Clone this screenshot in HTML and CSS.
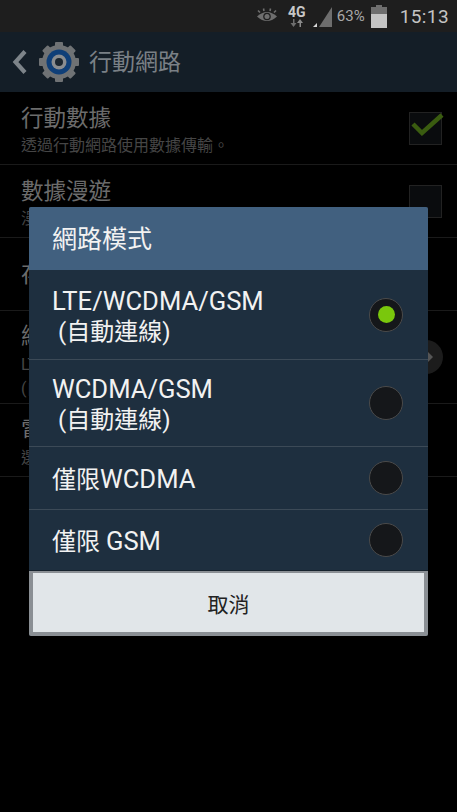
FILE: index.html
```html
<!DOCTYPE html>
<html lang="zh-Hant">
<head>
    <meta charset="UTF-8">
    <meta name="viewport" content="width=device-width, initial-scale=1.0">
    <title>行動網路</title>
    <link rel="stylesheet" href="styles.css">
</head>
<body>

    <!-- Status bar -->
    <div class="status-bar">
        <svg class="eye-icon" width="20" height="16" viewBox="0 0 20 16">
            <path d="M0 8.500 Q10 -0.500 20 8.500 Q10 17.500 0 8.500 Z" fill="#6e6e6e"/>
            <circle cx="10" cy="8.500" r="3.800" fill="#1e1e1e"/>
            <circle cx="10" cy="8.500" r="2.500" fill="#6e6e6e"/>
            <path d="M3 4.500 L1 2.500 M7 3 L6.500 0.500 M13 3 L13.500 0.500 M17 4.500 L19 2.500" stroke="#6e6e6e" stroke-width="1.600"/>
        </svg>
        <div class="net-type">
            <span>4G</span>
            <svg width="13" height="8" viewBox="0 0 13 8">
                <path d="M3 0 V4 H0.500 L3.500 8 L6.500 4 H4.500 V0 Z" fill="#6e6e6e"/>
                <path d="M9.500 8 V4 H7 L10 0 L13 4 H11 V8 Z" fill="#8a8a8a"/>
            </svg>
        </div>
        <svg class="signal-icon" width="20" height="20" viewBox="0 0 20 20">
            <path d="M19 0 V20 H6 Z" fill="#6e6e6e"/>
            <path d="M0 20 L4 16 V20 Z" fill="#d8d8d8"/>
        </svg>
        <span class="battery-text">63%</span>
        <div class="battery">
            <div class="battery-cap"></div>
            <div class="battery-empty"></div>
            <div class="battery-full"></div>
        </div>
        <span class="clock">15:13</span>
    </div>

    <!-- Action bar -->
    <div class="action-bar">
        <svg width="15" height="26" viewBox="0 0 15 26">
            <path d="M13 2.500 L3.500 13 L13 23.500" fill="none" stroke="#7d8489" stroke-width="4.200"/>
        </svg>
        <svg class="gear-icon" width="42" height="42" viewBox="0 0 42 42">
            <g fill="#6f7274">
                <circle cx="21" cy="21" r="17"/>
                <rect x="17" y="1" width="8" height="40" rx="1"/>
                <rect x="17" y="1" width="8" height="40" rx="1" transform="rotate(45 21 21)"/>
                <rect x="17" y="1" width="8" height="40" rx="1" transform="rotate(90 21 21)"/>
                <rect x="17" y="1" width="8" height="40" rx="1" transform="rotate(135 21 21)"/>
            </g>
            <circle cx="21" cy="21" r="12.500" fill="#0f3f78"/>
            <circle cx="21" cy="21" r="7.500" fill="#8a8d90"/>
            <circle cx="21" cy="21" r="4" fill="#1b2630"/>
        </svg>
        <span class="action-title">行動網路</span>
    </div>

    <!-- Settings list behind the dialog -->
    <div class="list">
        <div class="row">
            <div class="row-text">
                <div class="row-title">行動數據</div>
                <div class="row-sub">透過行動網路使用數據傳輸。</div>
            </div>
            <div class="checkbox">
                <svg class="check" width="33" height="24" viewBox="0 0 33 24">
                    <path d="M2 11 L11 20 L31 2" fill="none" stroke="#3a5c10" stroke-width="4.500"/>
                </svg>
            </div>
        </div>
        <div class="row">
            <div class="row-text">
                <div class="row-title">數據漫遊</div>
                <div class="row-sub">漫遊時連接數據服務</div>
            </div>
            <div class="checkbox"></div>
        </div>
        <div class="row">
            <div class="row-text">
                <div class="row-title">存取點名稱</div>
            </div>
        </div>
        <div class="row row-tall">
            <div class="row-text">
                <div class="row-title">網路模式</div>
                <div class="row-sub">LTE/WCDMA/GSM</div>
                <div class="row-sub">(自動連線)</div>
            </div>
            <div class="more-btn"></div>
        </div>
        <div class="row">
            <div class="row-text">
                <div class="row-title">電信業者</div>
                <div class="row-sub">選擇網路業者</div>
            </div>
        </div>
    </div>

    <!-- Network mode dialog -->
    <div class="dialog">
        <div class="dialog-title">網路模式</div>
        <div class="option option-first">
            <div class="label-two"><span class="latin">LTE/WCDMA/GSM</span><br>&nbsp;(自動連線)</div>
            <div class="radio on"></div>
        </div>
        <div class="option option-two">
            <div class="label-two"><span class="latin">WCDMA/GSM</span><br>&nbsp;(自動連線)</div>
            <div class="radio"></div>
        </div>
        <div class="option">
            <div class="label-one">僅限<span class="latin">WCDMA</span></div>
            <div class="radio"></div>
        </div>
        <div class="option option-last">
            <div class="label-one">僅限 <span class="latin">GSM</span></div>
            <div class="radio"></div>
        </div>
        <div class="cancel-wrap">
            <button class="cancel-btn">取消</button>
        </div>
    </div>

</body>
</html>
```

FILE: styles.css
```css
body {
    font-family: Roboto, "Noto Sans CJK TC", sans-serif;
    background-color: #000;
    margin: 0;
    padding: 0;
    width: 457px;
    height: 812px;
    overflow: hidden;
    position: relative;
}

/* Status bar */
.status-bar {
    height: 32px;
    background-color: #1e1e1e;
    display: flex;
    justify-content: flex-end;
    align-items: center;
    padding-right: 8px;
}

.eye-icon {
    margin-right: 11px;
}

.net-type {
    width: 18px;
    margin-right: 7px;
    display: flex;
    flex-direction: column;
    align-items: center;
    color: #c8c8c8;
    font-size: 14px;
    font-weight: bold;
    line-height: 13px;
}

.signal-icon {
    margin-right: 4px;
    margin-top: 2px;
}

.battery-text {
    color: #a8a8a8;
    font-size: 15px;
    margin-right: 6px;
}

.battery {
    width: 16px;
    margin-right: 13px;
    margin-top: 1px;
}

.battery-cap {
    width: 6px;
    height: 2px;
    margin: 0 auto;
    background-color: #6e6e6e;
}

.battery-empty {
    height: 7px;
    background-color: #6e6e6e;
}

.battery-full {
    height: 14px;
    background-color: #c4c4c4;
}

.clock {
    color: #c4c4c4;
    font-size: 19px;
    letter-spacing: 0.4px;
}

/* Action bar */
.action-bar {
    height: 60px;
    background-color: #141e27;
    display: flex;
    align-items: center;
    padding-left: 12px;
}

.gear-icon {
    margin-left: 11px;
    margin-right: 9px;
}

.action-title {
    color: #7a8086;
    font-size: 23px;
    line-height: 28px;
    margin-top: 1px;
}

/* List behind dialog */
.list {
    display: flex;
    flex-direction: column;
}

.row {
    height: 72px;
    border-bottom: 1px solid #1a1a1a;
    display: flex;
    justify-content: space-between;
    align-items: center;
    padding: 0 15px 0 21px;
}

.row-text {
    margin-top: 3px;
}

.row-tall {
    height: 92px;
    padding-right: 14px;
}

.row-tall .row-text {
    margin-top: 8px;
}

.row-title {
    color: #6c6c6c;
    font-size: 22.500px;
    line-height: 29px;
    margin-bottom: 2px;
}

.row-sub {
    color: #454545;
    font-size: 16px;
    line-height: 21px;
}

.row-tall .row-sub {
    line-height: 24px;
}

.checkbox {
    width: 31px;
    height: 31px;
    border: 1px solid #222;
    background-color: #0a0c0e;
    position: relative;
}

.check {
    position: absolute;
    top: 0;
    left: 1px;
}

.more-btn {
    width: 34px;
    height: 34px;
    border-radius: 50%;
    background-color: #1c1c1c;
    position: relative;
}

.more-btn::after {
    content: "";
    position: absolute;
    top: 12px;
    left: 19px;
    border-left: 5px solid #555;
    border-top: 5px solid transparent;
    border-bottom: 5px solid transparent;
}

/* Dialog */
.dialog {
    position: absolute;
    top: 207px;
    left: 29px;
    width: 399px;
    display: flex;
    flex-direction: column;
    background-color: #1e2f3f;
    border-radius: 2px;
    overflow: hidden;
}

.dialog-title {
    height: 63px;
    line-height: 66px;
    padding-left: 23px;
    background-color: #41607f;
    color: #f2f2f2;
    font-size: 25px;
}

.option {
    height: 62px;
    border-bottom: 1px solid #3c4a57;
    display: flex;
    justify-content: space-between;
    align-items: center;
    padding: 0 25px 0 23px;
    color: #f2f2f2;
    font-size: 24px;
    line-height: 30px;
}

.option-first {
    height: 89px;
}

.option-two {
    height: 86px;
}

.option-last {
    height: 60px;
    border-bottom: none;
}

.label-two {
    margin-top: 3px;
}

.label-one {
    margin-top: 2px;
}

.latin {
    font-size: 25.600px;
}

.radio {
    width: 32px;
    height: 32px;
    border: 1.500px solid #4a4a4a;
    border-radius: 50%;
    background-color: #15171a;
    display: flex;
    justify-content: center;
    align-items: center;
}

.radio.on::after {
    content: "";
    width: 17px;
    height: 17px;
    border-radius: 50%;
    background-color: #7ac70c;
}

.cancel-wrap {
    background-color: #8a8f94;
    padding: 2px 4px 4px;
    border-top: 1px solid #16222d;
}

.cancel-btn {
    display: block;
    width: 100%;
    height: 59px;
    border: none;
    background-color: #e1e6e9;
    color: #222;
    font-family: Roboto, "Noto Sans CJK TC", sans-serif;
    font-size: 21px;
}
```
